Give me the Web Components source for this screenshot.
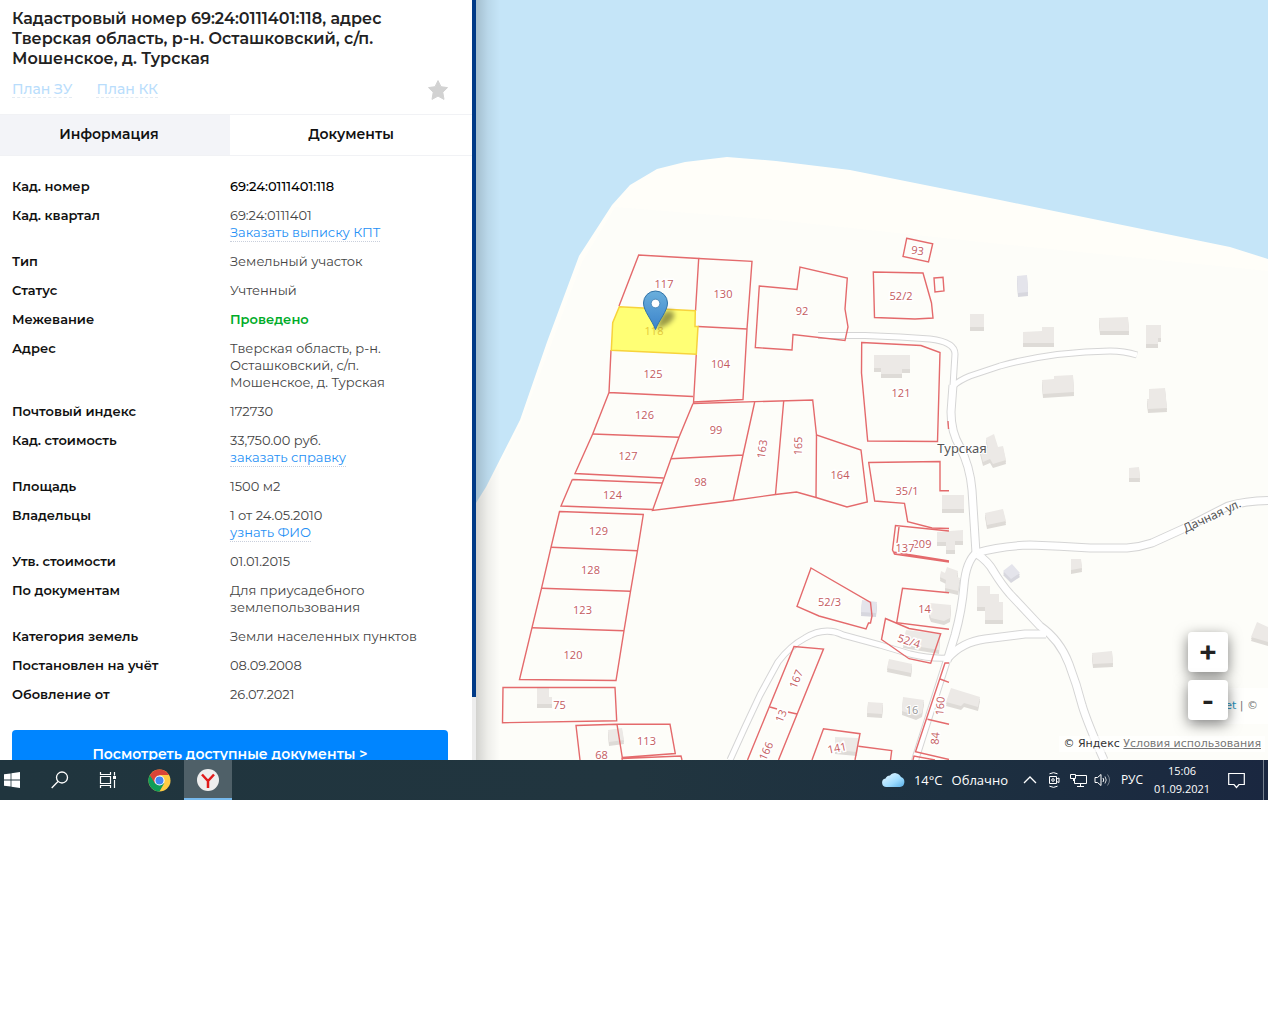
<!DOCTYPE html>
<html lang="ru">
<head>
<meta charset="utf-8">
<title>Кадастровая карта</title>
<style>
    body { margin: 0; background: #fff; font-family: Montserrat, Inter, "Open Sans", sans-serif; color: #000; }
</style>
</head>
<body>
<desktop-screen>
    <parcel-panel></parcel-panel>
    <cadastral-map></cadastral-map>
    <task-bar slot="taskbar"></task-bar>
</desktop-screen>

<script>
const desktopTemplate = document.createElement('template');
desktopTemplate.innerHTML = `
    <style>
        :host { display: flex; flex-direction: column; box-sizing: border-box; height: 100vh; padding: 0 12px 224px 0; }
        main { display: flex; flex: 1; min-height: 0; overflow: hidden; }
    </style>
    <main><slot></slot></main>
    <slot name="taskbar"></slot>
`;

class DesktopScreen extends HTMLElement {
    constructor() {
        super();
        this.attachShadow({ mode: 'open' });
        this.shadowRoot.appendChild(desktopTemplate.content.cloneNode(true));
    }
}

const rowTemplate = document.createElement('template');
rowTemplate.innerHTML = `
    <style>
        :host { display: grid; grid-template-columns: 1fr 1fr; font-size: 13px; line-height: 17px; }
        .label { font-weight: 600; color: #111; }
        .value { color: #444; font-weight: 400; }
        :host([strong]) .value { color: #000; font-weight: 500; }
        :host([ok]) .value { color: #00ac28; font-weight: 600; }
        ::slotted(a) { display: table; color: #2590f5; font-weight: 400; text-decoration: none; border-bottom: 1px dotted #c9cfdc; margin-bottom: -1px; }
    </style>
    <div class="label"></div>
    <div class="value"><slot></slot></div>
`;

class InfoRow extends HTMLElement {
    constructor() {
        super();
        this.attachShadow({ mode: 'open' });
        this.shadowRoot.appendChild(rowTemplate.content.cloneNode(true));
    }

    connectedCallback() {
        this.shadowRoot.querySelector('.label').textContent = this.getAttribute('label');
    }
}

const panelTemplate = document.createElement('template');
panelTemplate.innerHTML = `
    <style>
        :host { display: flex; flex: none; width: 476px; background: #fff; }
        .content { flex: 1; min-width: 0; }
        .scroll { width: 4px; background: #ededed; }
        .thumb { height: calc(100% - 63px); background: #003a87; }
        header { padding: 9px 24px 14px 12px; }
        h1 { margin: 0; font-size: 16px; line-height: 20px; font-weight: 600; color: #222; padding-right: 40px; }
        .plans { display: flex; gap: 24px; align-items: center; font-size: 14px; line-height: 16px; padding-top: 11px; }
        .plans a { color: #b9ddfc; font-weight: 500; text-decoration: none; border-bottom: 1px dashed #e4ebf2; margin-bottom: 2px; }
        .star { margin-left: auto; border: 0; padding: 0; background: none; height: 20px; }
        .star svg { display: block; }
        .tabs { display: flex; border: 1px solid #f1f2f5; border-width: 1px 0; }
        .tabs button { font: inherit; font-size: 14px; font-weight: 600; line-height: 16px; border: 0; padding: 11px 0 13px; height: 40px; background: none; color: #111; flex: 1; }
        .tabs button.active { background: #f3f4f8; flex: none; width: 230px; padding-right: 12px; }
        .rows { display: flex; flex-direction: column; gap: 12px; padding: 22px 24px 27px 12px; }
        .open { display: block; width: calc(100% - 36px); height: 48px; margin: 0 24px 0 12px; border: 0; border-radius: 4px; background: #0085ff; color: #fff; font: inherit; font-size: 14px; font-weight: 600; }
    </style>
    <div class="content">
        <header>
            <h1>Кадастровый номер 69:24:0111401:118, адрес Тверская область, р-н. Осташковский, с/п. Мошенское, д. Турская</h1>
            <div class="plans">
                <a href="#zu">План ЗУ</a>
                <a href="#kk">План КК</a>
                <button class="star" aria-label="В избранное">
                    <svg width="20" height="20" viewBox="0 0 20 20"><path fill="#d2d2d2" stroke="#d2d2d2" stroke-linejoin="round" d="M10 .6 13 6.7 19.5 7.6 14.8 12.2 16 19.4 10 16.1 4 19.4 5.2 12.2.5 7.6 7 6.7Z"/></svg>
                </button>
            </div>
        </header>
        <div class="tabs" role="tablist">
            <button class="active" role="tab" aria-selected="true">Информация</button>
            <button role="tab" aria-selected="false">Документы</button>
        </div>
        <div class="rows">
            <info-row label="Кад. номер" strong>69:24:0111401:118</info-row>
            <info-row label="Кад. квартал">69:24:0111401<a href="#kpt">Заказать выписку КПТ</a></info-row>
            <info-row label="Тип">Земельный участок</info-row>
            <info-row label="Статус">Учтенный</info-row>
            <info-row label="Межевание" ok>Проведено</info-row>
            <info-row label="Адрес">Тверская область, р-н.<br>Осташковский, с/п.<br>Мошенское, д. Турская</info-row>
            <info-row label="Почтовый индекс">172730</info-row>
            <info-row label="Кад. стоимость">33,750.00 руб.<a href="#cost">заказать справку</a></info-row>
            <info-row label="Площадь">1500 м2</info-row>
            <info-row label="Владельцы">1 от 24.05.2010<a href="#owner">узнать ФИО</a></info-row>
            <info-row label="Утв. стоимости">01.01.2015</info-row>
            <info-row label="По документам">Для приусадебного<br>землепользования</info-row>
            <info-row label="Категория земель">Земли населенных пунктов</info-row>
            <info-row label="Постановлен на учёт">08.09.2008</info-row>
            <info-row label="Обовление от">26.07.2021</info-row>
        </div>
        <button class="open">Посмотреть доступные документы &gt;</button>
    </div>
    <div class="scroll"><div class="thumb"></div></div>
`;

class ParcelPanel extends HTMLElement {
    constructor() {
        super();
        this.attachShadow({ mode: 'open' });
        this.shadowRoot.appendChild(panelTemplate.content.cloneNode(true));
    }
}

// casing width, then the centre line
const roads = [
    [7, 'M818 335.5 865 335.5 900 337 930 339Q955 342 955 354L953 386'],
    [7, 'M953 386Q960 380 970 376L1000 366Q1050 352 1110 351 1124 351 1137 355'],
    [7, 'M948 658Q930 659 910 654L880 645 843 635Q825 626 805 638 790 646 778 662L760 695 745 727 730 760'],
    [8, 'M947 660 916 757 914 765'],
    [9, 'M953 385 951 412Q951 432 960 447 970 466 972 490L976 553'],
    [9, 'M976 553Q1000 546 1030 545 1060 546 1090 548L1127 548Q1140 547 1152 543L1185 528 1228 506Q1245 501 1268 500.5'],
    [9, 'M976 553Q966 562 964 585 962 610 955 635L947 661'],
    [9, 'M977 554Q988 561 994 572 1002 585 1010 594L1040 626Q1060 640 1069 664 1077 685 1082 705 1087 722 1104 760'],
    [9, 'M948 658Q962 642 985 639L1025 634 1046 634']
];

const buildings = [
    '874,355 910,355 910,369 902,369 902,374 881,374 881,368 874,368',
    '970,314 984,314 984,327 970,327',
    '1023,332 1042,331 1042,327 1054,327 1054,343 1023,343',
    '1099,318 1128,317 1129,331 1100,331',
    '1146,325 1161,325 1161,338 1158,338 1158,344 1146,344',
    '1042,380 1054,379 1054,376 1073,375 1074,392 1043,394',
    '1149,389 1165,388 1167,408 1148,409 1147,399 1149,399',
    '1129,468 1139,467 1140,478 1129,478',
    '986,438 994,434 998,447 1003,446 1006,460 993,464 990,459 983,462 980,450 988,448',
    '942,495 964,495 964,509 942,509',
    '985,513 1003,509 1006,521 987,525',
    '937,532 963,530 963,541 955,541 955,550 946,550 946,542 937,542',
    '947,567 958,571 957,577 960,578 958,591 945,588 946,580 940,577 941,571 945,573',
    '930,603 951,605 950,618 944,621 931,618 929,613',
    '906,630 940,634 939,650 903,644',
    '889,659 912,664 911,673 887,668',
    '868,702 883,703 882,714 867,713',
    '903,697 924,700 922,713 916,716 902,711',
    '951,688 980,697 978,707 964,703 961,706 946,702',
    '835,737 858,738 857,752 835,750',
    '1071,559 1081,559 1082,568 1071,570',
    '977,586 990,586 990,594 999,594 999,602 1003,602 1003,620 985,620 985,607 977,607',
    '1092,653 1112,651 1113,663 1093,664',
    '1257,622 1268,627 1268,642 1251,637',
    '537,688 549,688 549,697 552,697 552,704 537,704',
    '608,730 622,728 624,740 609,742'
];

const sheds = [
    '1017,276 1027,275 1028,292 1018,293',
    '862,600 877,602 876,613 861,612',
    '1003,571 1012,564 1020,573 1011,579'
];

const parcels = [
    'M619 306 638.7 255 698.7 258.5 695.5 311',
    'M698.7 258.5 752 261.3 747 329 743 399.5 693 402',
    'M698 326.5 747 329M696.3 354 693.5 403',
    'M611 350 609 392.5 693 396.5M609 392.5 592.7 434 575 473.5 663.7 478',
    'M592.7 434 679 437.3M572.3 479.5 662 483M572.3 479.5 561 506 652.5 509.5',
    'M693 403.5 679 437.3 671 458.7 652.5 510.5 733 500.5 775.5 494.5 796.5 492 816 497.5 847 507 867.3 502 861 450 816.5 435 812.7 400 693 403.5',
    'M754.7 402 743 455 733.3 500M671 458.7 743 455M783.7 401 775.5 494.3M816.5 435 816 497.5',
    'M559.5 511.5 643.3 514.5 637.5 550.7 630.5 591.3 624 630.7 616 680.5 519.5 679.5 532 627.7 541.5 588.3 551 547.3Z',
    'M551 547.3 637.5 550.7M541.5 588.3 630.5 591.3M532 627.7 624 630.7',
    'M503 687.5 615 687.5 616.7 720.7 502.5 722.7Z',
    'M580 760 576 725.5 617 724.3 670 724.3 675.3 753.5 622.3 757.5 617 724.3M622.3 760 622 758.5 681 756 682 760',
    'M759.3 286 797 289.5 800 267 847.3 278 845 309 848 327 845 340.5 793 334.5 792 350 755.3 347.5Z',
    'M873.3 272 923 273 931.5 303 933 318 915 319 874.5 317.5Z',
    'M906.7 238.3 932.7 243.7 928.5 262 903 256.5Z',
    'M934 278 943 277.3 944 291 935 292Z',
    'M861.7 342.5 921 345.5 940 352.5 937.5 441.5 867.7 441 861.5 373Z',
    'M949 490.7 940 490.7 940 461.5 868.7 462.5 874.7 501 904.5 503.3 907.7 521.7 932 528 949 528.5',
    'M949 531 895.5 525.5 892.5 550 894.5 554 949 562M899 527 897 543M949 561 893 552',
    'M949 592.7 902.5 588.3 896.7 622.7 949 629.3',
    'M885.5 618.5 909 628.5 940.7 633.7 930.7 663.3 909 658.7 881.5 639.5Z',
    'M811 568 870.5 602.5 872 616 870.5 623 868.5 623 866 629 819 616 797 606.3Z',
    'M747.5 760 794 646.5 823.5 649 778.5 760M770 707 777 709M788 712 797 714',
    'M812 760 823.5 728.7 860 733.7 855 760M858.5 746.3 891.7 750.5 890.5 760',
    'M949 663 945 663 915.5 751.7 949 759.5M940 679 949 682.3M927.5 719.3 949 724.3M913 760 914 756 935 760',
    'M948 421 948.5 429'
];

// text, centre x, centre y, turn
const labels = [
    ['117', 664, 284], ['130', 723, 294], ['125', 653, 373.5], ['104', 720.5, 364], ['126', 644.5, 415],
    ['127', 628, 456], ['124', 612.5, 494.5], ['99', 716, 429.5], ['98', 700.5, 482], ['163', 762, 449, -82],
    ['165', 798, 446, -88], ['164', 840, 474.5], ['92', 802, 311], ['52/2', 901, 295.5], ['93', 917.5, 250.5, 8],
    ['121', 901, 393], ['35/1', 907, 491], ['209', 922, 543.5], ['137', 905, 547.5], ['129', 598.5, 531],
    ['128', 590.5, 569.5], ['123', 582.5, 609.5], ['120', 573, 655], ['75', 559.5, 705], ['68', 601.5, 754.5],
    ['113', 646.5, 740.5], ['52/3', 829.5, 601.5], ['14', 924.5, 608.5], ['52/4', 909, 641, 18], ['167', 796, 679, -68],
    ['13', 781, 716, -68], ['166', 766, 751, -66], ['141', 837, 748, -12], ['160', 940, 706, -85], ['84', 935, 738.5, -85]
];

const mapTemplate = document.createElement('template');
mapTemplate.innerHTML = `
    <style>
        :host { display: block; flex: 1; min-width: 0; position: relative; overflow: hidden; background: #fdfdf9; }
        .map { display: block; width: 100%; height: 100%; }
        .edge { position: absolute; inset: 0 auto 0 0; width: 24px; background: linear-gradient(90deg, rgba(0,0,0,.17), rgba(0,0,0,.06) 50%, transparent); }
        .parcel-labels { font: 11px "Open Sans", "Noto Sans", sans-serif; fill: #c45b60; stroke: #fff; stroke-width: 3px; paint-order: stroke; text-anchor: middle; }
        .place { font: 13px "Noto Sans", sans-serif; fill: #555; stroke: #fff; stroke-width: 2px; paint-order: stroke; text-anchor: middle; }
        .zoom { position: absolute; right: 40px; bottom: 40px; display: flex; flex-direction: column; gap: 8px; }
        .zoom button { width: 40px; height: 40px; padding: 0; border: 0; border-radius: 4px; background: #fff; color: #222; font: 600 32px/40px Montserrat, "Open Sans", sans-serif; box-shadow: 0 4px 14px rgba(0,0,0,.5); }
        .leaflet { position: absolute; right: 0; bottom: 36px; box-sizing: border-box; width: 80px; height: 36px; padding: 0 10px; background: rgba(255,255,255,.7); font: 11px/36px "DejaVu Sans", sans-serif; color: #777; text-align: right; white-space: nowrap; }
        .leaflet a { color: #2a93bd; text-decoration: none; }
        .yandex { position: absolute; right: 3px; bottom: 8px; padding: 0 4px; background: rgba(255,255,255,.7); font: 11px/16px "DejaVu Sans", sans-serif; color: #333; white-space: nowrap; }
        .yandex a { color: #777; }
    </style>
    <svg class="map" viewBox="476 0 792 760" preserveAspectRatio="xMinYMin slice">
        <defs>
            <linearGradient id="pin" x2="0" y2="1"><stop stop-color="#6aafdc"/><stop offset="1" stop-color="#3b83cb"/></linearGradient>
            <filter id="blur" x="-50%" y="-50%" width="200%" height="200%"><feGaussianBlur stdDeviation="2.500"/></filter>
        </defs>
        <path fill="#c5e5f8" d="M476 0H1268V300H476Z M476 250H640V510H476Z"/>
        <path fill="#fffef9" d="M476 503 486 487 520 420 547 342 579 256 612 205 630 185 657 169 685 162 727 157 776 161 850 170 1000 200 1230 247 1268 259V760H476Z"/>
        <path fill="#fdfdf9" d="M476 506 488 487 522 421 552 342 582 262 615 207 776 220 1000 244 1268 271V760H476Z"/>
        <g class="buildings"></g>
        <g class="roads" fill="none" stroke-linejoin="round"></g>
        <g class="parcels" fill="none" stroke="#e46a6c" stroke-width="1.4"></g>
        <path fill="#ff6" fill-opacity=".9" stroke="#f7d33c" stroke-width="1.5" d="M619.3 306.7 695.3 310.7 695 326.5 698 326.5 696.3 354.3 611.3 350.3 612.7 322.7Z"/>
        <g class="parcel-labels">
            <text x="654" y="335" fill="#e5c93a" stroke="none">118</text>
        </g>
        <g class="place">
            <text x="962" y="453">Турская</text>
            <text transform="translate(1212 516) rotate(-25)" y="4" font-size="12">Дачная ул.</text>
            <text x="912" y="714" font-size="11" fill="#999">16</text>
        </g>
        <path fill="#000" fill-opacity=".4" filter="url(#blur)" d="M656 330 661 316Q667 308 673 312 677 317 668 324Z"/>
        <path fill="url(#pin)" stroke="#3274a8" d="M655.500 329.500C652 320 643.500 311 643.500 303A12 12 0 0 1 667.500 303C667.500 311 659 320 655.500 329.500Z"/>
        <circle cx="655.500" cy="303.500" r="4.300" fill="#fff" stroke="#3274a8" stroke-width=".7"/>
    </svg>
    <div class="edge"></div>
    <div class="leaflet"><a href="#leaflet">Leaflet</a> | ©</div>
    <div class="yandex">© Яндекс <a href="#terms">Условия использования</a></div>
    <div class="zoom">
        <button aria-label="Приблизить">+</button>
        <button aria-label="Отдалить">-</button>
    </div>
`;

class CadastralMap extends HTMLElement {
    constructor() {
        super();
        this.attachShadow({ mode: 'open' });
        this.shadowRoot.appendChild(mapTemplate.content.cloneNode(true));
    }

    connectedCallback() {
        const root = this.shadowRoot;
        const house = (points, top, wall) => `
            <polygon points="${points}" fill="${wall}" stroke="none" transform="translate(0 4)"/>
            <polygon points="${points}" fill="${wall}" transform="translate(0 2)"/>
            <polygon points="${points}" fill="${top}"/>`;

        root.querySelector('.buildings').innerHTML =
            buildings.map(p => house(p, '#ece9e6', '#dedbd7')).join('') +
            sheds.map(p => house(p, '#e4e4eb', '#d7d7de')).join('');

        root.querySelector('.roads').innerHTML =
            roads.map(([w, d]) => `<path d="${d}" stroke="#d5d5d5" stroke-width="${w}"/>`).join('') +
            roads.map(([w, d]) => `<path d="${d}" stroke="#fff" stroke-width="${w - 2}"/>`).join('');

        root.querySelector('.parcels').innerHTML = parcels.map(d => `<path d="${d}"/>`).join('');

        root.querySelector('.parcel-labels').insertAdjacentHTML('beforeend', labels.map(([text, x, y, turn = 0]) =>
            `<text transform="translate(${x} ${y}) rotate(${turn})" y="4">${text}</text>`).join(''));
    }
}

const taskbarTemplate = document.createElement('template');
taskbarTemplate.innerHTML = `
    <style>
        :host { display: flex; height: 40px; flex: none; background: linear-gradient(90deg, #20353e, #21353f 50%, #1d3040 75%, #1a2740); color: #fff; font: 12px/18px "Open Sans", "Noto Sans", sans-serif; }
        button { display: flex; align-items: center; justify-content: center; box-sizing: border-box; width: 48px; height: 40px; padding: 0; border: 0; background: none; color: inherit; font: inherit; }
        svg { display: block; fill: none; stroke: #fff; }
        .start { width: 36px; padding-right: 12px; }
        .chrome { margin-left: 4px; padding-right: 2px; }
        .active { background: #4f6068; box-shadow: inset 0 -2px #76b9ed; }
        .weather { width: auto; margin-left: auto; gap: 9px; margin-right: 10px; font-size: 13px; }
        .tray { width: 24px; }
        .lang { width: 36px; }
        .clock { width: 64px; flex-direction: column; white-space: nowrap; font-size: 11px; }
        .notices { width: 44px; }
        .show { width: 5px; margin-left: 5px; border-left: 1px solid #75808e; }
    </style>
    <button class="start" aria-label="Пуск"><svg width="16" height="16" viewBox="0 0 16 16"><path fill="#fff" stroke="none" d="M0 2.300 6.600 1.400V7.600H0ZM7.400 1.200 16 0V7.600H7.400ZM0 8.400H6.600V14.600L0 13.700ZM7.400 8.400H16V16L7.400 14.800Z"/></svg></button>
    <button aria-label="Поиск"><svg width="18" height="18" viewBox="0 0 18 18" stroke-width="1.300"><circle cx="11" cy="6.500" r="5.500"/><path d="M7 10.500.700 17"/></svg></button>
    <button aria-label="Представление задач"><svg width="18" height="16" viewBox="0 0 18 16" stroke-width="1.200"><path d="M1.500 0V2.500H11.500V0M1.500 4.500H11.500V11.500H1.500ZM1.500 16V13.500H11.500V16M15.500 0V3.500M15.500 8V16"/><path fill="#fff" stroke="none" d="M14 4H17V7H14Z"/></svg></button>
    <button class="chrome" aria-label="Chrome"><svg width="23" height="23" viewBox="-12 -12 24 24"><g stroke="none"><circle r="11.500" fill="#fc4"/><path fill="#db4437" d="M-10 -5.750A11.500 11.500 0 0 1 10 -5.750H0L-5 3Z"/><path fill="#0f9d58" d="M-10 -5.750A11.500 11.500 0 0 0 0 11.500L5 2.500-4 3Z"/><path fill="#db4437" d="M-10 -5.750-4.700 3 0 -5.500Z"/><circle r="5.300" fill="#fff"/><circle r="4.200" fill="#4285f4"/></g></svg></button>
    <button class="active" aria-label="Яндекс.Браузер"><svg width="22" height="22" viewBox="0 0 22 22"><circle cx="11" cy="11" r="11" fill="#eee" stroke="none"/><path stroke="#e01b1b" stroke-width="2.500" d="M5 5.500 11 12 17 5.500M11 11.500V19"/></svg></button>
    <button class="weather">
        <svg width="23" height="16" viewBox="0 0 23 16"><defs><linearGradient id="cloud" x2="1" y2="1"><stop stop-color="#eefaff"/><stop offset=".6" stop-color="#9edcff"/><stop offset="1" stop-color="#58aee6"/></linearGradient></defs><path fill="url(#cloud)" stroke="none" d="M4.500 15A4.300 4.300 0 0 1 3.500 6.500 5 5 0 0 1 8 3.500 6.500 6.500 0 0 1 19 5 5.200 5.200 0 0 1 18 15Z"/></svg>
        <span>14°C</span><span>Облачно</span>
    </button>
    <button class="tray" aria-label="Скрытые значки"><svg width="14" height="8" viewBox="0 0 14 8" stroke-width="1.300"><path d="M1 7 7 1 13 7"/></svg></button>
    <button class="tray" aria-label="Камера"><svg width="14" height="16" viewBox="0 0 14 16"><path d="M2.500 4.500H9.500V11.500H2.500ZM9.500 7 12 6V10.500L9.500 9.500M2.500 1.800Q6.500 -.500 10.500 1.800M2.500 14.200Q6.500 16.500 10.500 14.200"/><circle cx="6" cy="8" r="1.300"/></svg></button>
    <button class="tray" aria-label="Сеть"><svg width="17" height="15" viewBox="0 0 17 15"><path d="M5 2.500H16.500V10.500H4.500V5M10.500 10.500V13.500M7 13.500H14M.500 1.500H5.500V5.500H.500ZM3.500 5.500V8"/></svg></button>
    <button class="tray" aria-label="Громкость"><svg width="17" height="14" viewBox="0 0 17 14"><path d="M1 4.500H3.500L7 1.500V12.500L3.500 9.500H1ZM9 5Q10.500 7 9 9"/><path stroke-opacity=".8" d="M11 3.500Q13.500 7 11 10.500"/><path stroke-opacity=".4" d="M13.500 1.500Q17.500 7 13.500 12.500"/></svg></button>
    <button class="lang">РУС</button>
    <button class="clock"><time>15:06</time><time>01.09.2021</time></button>
    <button class="notices" aria-label="Уведомления"><svg width="17" height="17" viewBox="0 0 17 17" stroke-width="1.200"><path d="M.700 1.500H16.300V12.500H11L8.500 15.500 6 12.500H.700Z"/></svg></button>
    <button class="show" aria-label="Показать рабочий стол"></button>
`;

class TaskBar extends HTMLElement {
    constructor() {
        super();
        this.attachShadow({ mode: 'open' });
        this.shadowRoot.appendChild(taskbarTemplate.content.cloneNode(true));
    }
}

customElements.define('info-row', InfoRow);
customElements.define('parcel-panel', ParcelPanel);
customElements.define('cadastral-map', CadastralMap);
customElements.define('task-bar', TaskBar);
customElements.define('desktop-screen', DesktopScreen);
</script>
</body>
</html>
